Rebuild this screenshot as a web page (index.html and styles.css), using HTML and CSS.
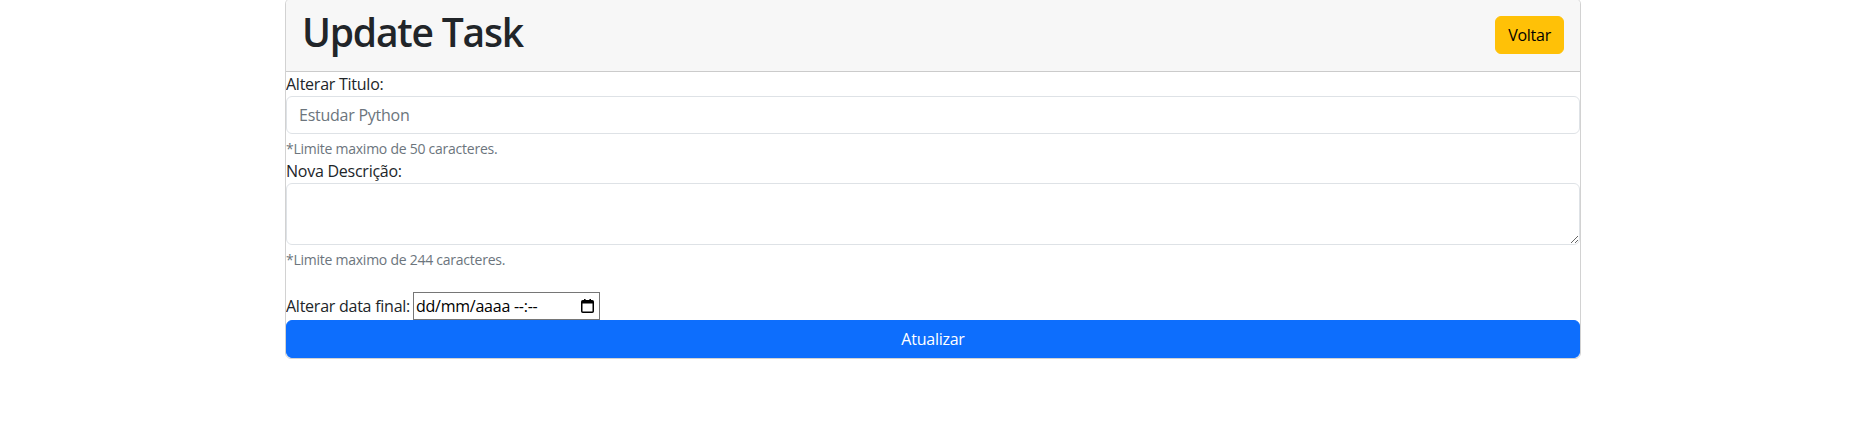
FILE: index.html
```html
<!DOCTYPE html>
<html lang="pt-BR">
<head>
<meta charset="utf-8">
<title>Update Task</title>
<link rel="stylesheet" href="styles.css">
</head>
<body>
<div class="container">
  <div class="card">
    <div class="card-header">
      <h1 class="title">Update Task</h1>
      <button class="btn btn-warning" type="button">Voltar</button>
    </div>
    <form class="task-form">
      <label class="field-label" for="titulo">Alterar Titulo:</label>
      <input class="form-control" id="titulo" type="text" placeholder="Estudar Python">
      <div class="form-text">*Limite maximo de 50 caracteres.</div>
      <label class="field-label" for="descricao">Nova Descrição:</label>
      <textarea class="form-control textarea" id="descricao" rows="2"></textarea>
      <div class="form-text">*Limite maximo de 244 caracteres.</div>
      <div class="date-row">
        <label for="data">Alterar data final:</label>
        <div class="date-input" id="data">
          <span class="date-text">dd/mm/aaaa --:--</span>
          <svg class="cal-icon" width="13" height="14" viewBox="0 0 13 14" aria-hidden="true">
            <rect x="3" y="0" width="1.6" height="3" fill="#000"/>
            <rect x="8.4" y="0" width="1.6" height="3" fill="#000"/>
            <rect x="0.75" y="1.75" width="11.5" height="11.5" rx="1" fill="none" stroke="#000" stroke-width="1.5"/>
            <rect x="1" y="2" width="11" height="2.5" fill="#000"/>
          </svg>
        </div>
      </div>
      <button class="btn btn-primary btn-block" type="submit">Atualizar</button>
    </form>
  </div>
</div>
</body>
</html>
```

FILE: styles.css
```css
* {
  box-sizing: border-box;
}

body {
  margin: 0;
  font-family: "Open Sans", "Noto Sans", sans-serif;
  font-size: 16px;
  line-height: 1.5;
  letter-spacing: -0.25px;
  color: #212529;
  background: #fff;
}

.container {
  max-width: 1320px;
  margin: 0 auto;
  padding: 0 12px;
}

.card {
  margin-top: -2px;
  border: 1px solid rgba(0, 0, 0, 0.175);
  border-radius: 6px;
  overflow: hidden;
}

.card-header {
  display: flex;
  justify-content: space-between;
  align-items: center;
  padding: 8px 16px;
  background: #f7f7f7;
  border-bottom: 1px solid rgba(0, 0, 0, 0.175);
}

.title {
  margin: 1px 0 7px;
  font-size: 39px;
  font-weight: 600;
  line-height: 48px;
  letter-spacing: -1.2px;
  color: #212529;
}

.btn {
  font-family: inherit;
  font-size: 16px;
  line-height: 24px;
  letter-spacing: inherit;
  padding: 6px 12px;
  border-radius: 6px;
  border: 1px solid transparent;
  cursor: pointer;
}

.btn-warning {
  background: #ffc107;
  border-color: #ffc107;
  color: #000;
}

.btn-primary {
  background: #0d6efd;
  border-color: #0d6efd;
  color: #fff;
}

.btn-block {
  display: block;
  width: 100%;
}

.task-form {
  display: flex;
  flex-direction: column;
}

.field-label {
  display: block;
  line-height: 24px;
}

.form-control {
  display: block;
  width: 100%;
  height: 38px;
  padding: 6px 12px;
  font-family: inherit;
  font-size: 16px;
  line-height: 24px;
  letter-spacing: inherit;
  color: #212529;
  background: #fff;
  border: 1px solid #dee2e6;
  border-radius: 6px;
}

.form-control::placeholder {
  color: #6c757d;
}

.textarea {
  height: 62px;
  resize: vertical;
}

.form-text {
  margin-top: 4px;
  font-size: 14px;
  line-height: 21px;
  color: #6c757d;
}

.date-row {
  display: flex;
  align-items: center;
  gap: 3px;
  margin-top: 22px;
}

.date-input {
  display: flex;
  align-items: center;
  justify-content: space-between;
  width: 187px;
  height: 28px;
  padding: 1px 5px 1px 2px;
  border: 1px solid #767676;
  background: #fff;
  color: #000;
}

.date-text {
  line-height: 24px;
}

.cal-icon {
  display: block;
}
```
